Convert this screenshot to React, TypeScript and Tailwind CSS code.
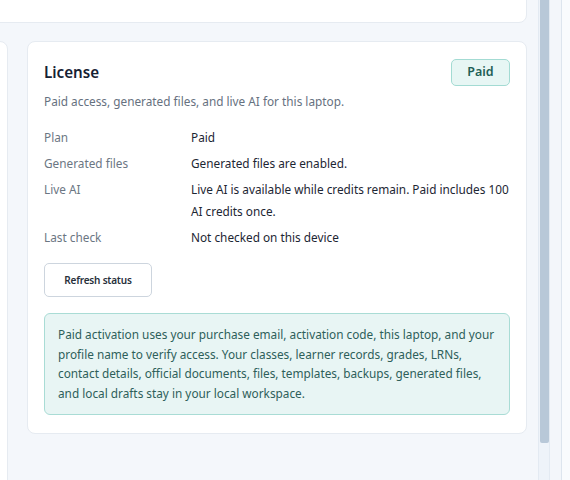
import React from "react";

const rows: { label: string; value: string }[] = [
  { label: "Plan", value: "Paid" },
  { label: "Generated files", value: "Generated files are enabled." },
  {
    label: "Live AI",
    value: "Live AI is available while credits remain. Paid includes 100 AI credits once.",
  },
  { label: "Last check", value: "Not checked on this device" },
];

export default function App() {
  return (
    <div
      className="w-[570px] h-[480px] overflow-hidden flex bg-[#f4f7fb]"
      style={{ fontFamily: '"Noto Sans", "Liberation Sans", sans-serif' }}
    >
      <div className="w-[538px] h-full overflow-hidden flex flex-col">
        <div className="-mt-[40px] -ml-[40px] w-[567px] h-[63px] shrink-0 rounded-lg bg-white border border-[#e6ebf1]" />
        <div className="flex items-start gap-[19px] mt-[18px]">
          <div className="-ml-[92px] w-[100px] h-[500px] shrink-0 rounded-lg bg-white border border-[#e6ebf1]" />
          <div className="w-[500px] shrink-0 rounded-lg bg-white border border-[#e6ebf1] px-4 pt-[17px] pb-[18px]">
            <div className="flex items-start justify-between">
              <h2 className="text-[15.2px] leading-[24px] font-semibold text-[#152133] mt-[1px]">License</h2>
              <span className="h-[27px] w-[59px] flex items-center justify-center rounded-[5px] border border-[#a3dbd3] bg-[#e7f6f4] text-[12.5px] font-semibold text-[#1e5f56]">
                Paid
              </span>
            </div>
            <p className="text-[11.8px] leading-[20px] text-[#667180] mt-[5px]">
              Paid access, generated files, and live AI for this laptop.
            </p>
            <div className="mt-[15px] flex flex-col gap-[4px]">
              {rows.map((r) => (
                <div key={r.label} className="grid grid-cols-[147px_1fr] text-[11.8px] leading-[22px]">
                  <span className="text-[#6b7683]">{r.label}</span>
                  <span className="text-[#1d2633]">{r.value}</span>
                </div>
              ))}
            </div>
            <button className="mt-[15px] h-[34px] w-[108px] rounded-[5px] border border-[#cdd5de] bg-white text-[10px] font-semibold tracking-[-0.2px] text-[#27303b]">
              Refresh status
            </button>
            <div className="mt-[16px] rounded-[6px] border border-[#a9dcd5] bg-[#e8f5f4] px-[13px] py-[11px] text-[11.8px] leading-[19.5px] text-[#2e5f5a]">
              Paid activation uses your purchase email, activation code, this laptop, and your profile name to verify
              access. Your classes, learner records, grades, LRNs, contact details, official documents, files,
              templates, backups, generated files, and local drafts stay in your local workspace.
            </div>
          </div>
        </div>
      </div>
      <div className="w-[12px] h-full bg-[#eef3f9] border-x border-[#e3eaf2] flex justify-center">
        <div className="w-[9px] h-[443px] rounded-b-[2px] bg-[#b8c8d8]" />
      </div>
      <div className="w-[12px] h-full bg-[#f3f6fa] border-r border-[#dde5ee]" />
      <div className="flex-1 h-full bg-[#f9fbfd]" />
    </div>
  );
}
